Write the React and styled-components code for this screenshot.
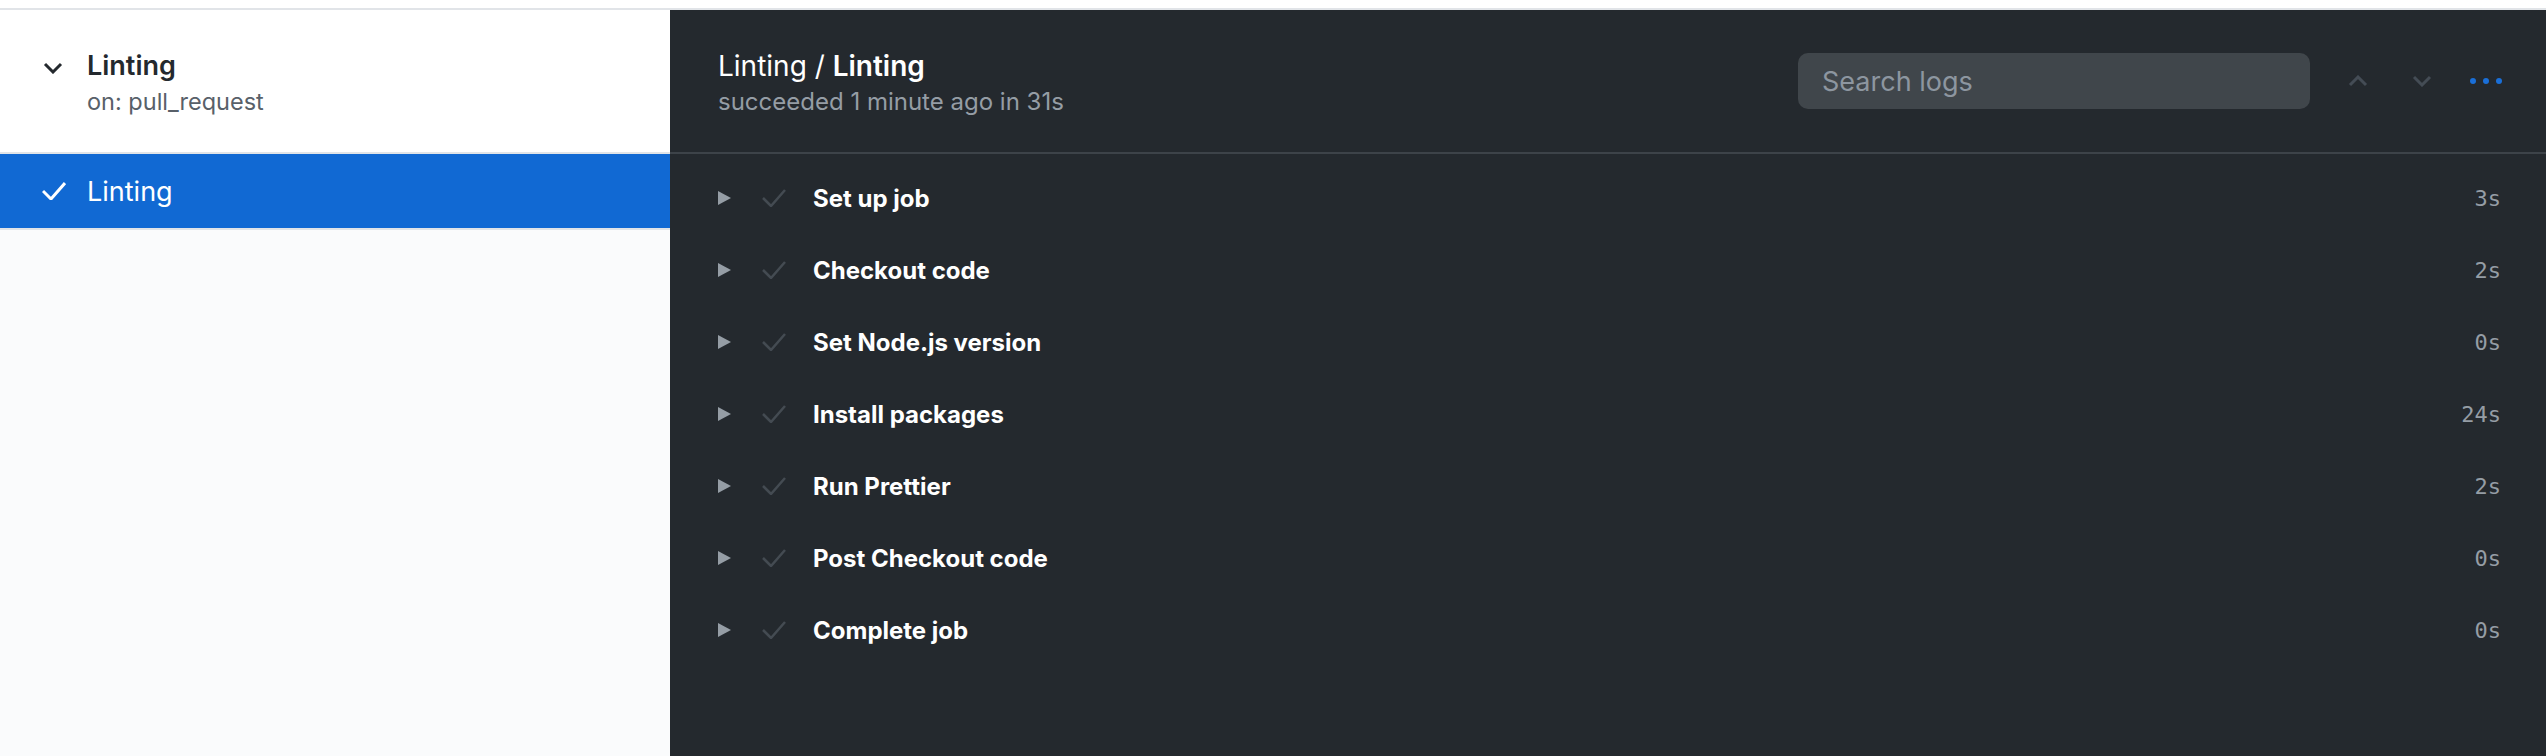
import React from 'react';
import styled, { createGlobalStyle } from 'styled-components';

const GlobalStyle = createGlobalStyle`
  html, body {
    margin: 0;
    padding: 0;
    background: #ffffff;
  }
  body {
    font-family: Inter, "Liberation Sans", sans-serif;
    -webkit-font-smoothing: antialiased;
  }
`;

const Page = styled.div`
  padding-top: 8px;
  background: #ffffff;
`;

const Main = styled.div`
  display: flex;
  height: 746px;
  border-top: 2px solid #e1e4e8;
`;

const Sidebar = styled.aside`
  width: 670px;
  flex-shrink: 0;
  background: #fafbfc;
`;

const SideHeader = styled.div`
  height: 144px;
  display: flex;
  align-items: center;
  padding: 6px 0 0 43px;
  background: #ffffff;
  border-bottom: 2px solid #e1e4e8;
  box-sizing: border-box;
`;

const SideHeaderInner = styled.div`
  display: flex;
  align-items: flex-start;
  gap: 24px;
`;

const IconSlot = styled.span`
  display: flex;
  width: 20px;
  margin-top: 14px;
`;

const TitleBlock = styled.div`
  display: flex;
  flex-direction: column;
`;

const WorkflowName = styled.div`
  font-size: 27px;
  line-height: 36px;
  font-weight: 600;
  color: #24292e;
`;

const Trigger = styled.div`
  font-size: 23.5px;
  line-height: 36px;
  color: #586069;
`;

const JobItem = styled.div`
  height: 76px;
  box-sizing: border-box;
  display: flex;
  align-items: center;
  gap: 21px;
  padding-left: 42px;
  background: ${(p) => (p.$active ? '#1169d3' : 'transparent')};
  color: ${(p) => (p.$active ? '#ffffff' : '#24292e')};
  border-bottom: 2px solid #e1e4e8;
  font-size: 27px;
`;

const Content = styled.section`
  flex: 1;
  background: #24292e;
  display: flex;
  flex-direction: column;
`;

const ContentHeader = styled.header`
  height: 144px;
  box-sizing: border-box;
  display: flex;
  align-items: center;
  padding: 0 44px 0 48px;
  border-bottom: 2px solid #3d4349;
`;

const JobTitle = styled.div`
  flex: 1;
  display: flex;
  flex-direction: column;
  padding-top: 6px;
`;

const JobName = styled.div`
  font-size: 28px;
  line-height: 36px;
  color: #ffffff;

  strong {
    font-weight: 600;
  }
`;

const JobStatus = styled.div`
  font-size: 24px;
  line-height: 36px;
  color: #959da5;
`;

const SearchBox = styled.input`
  width: 512px;
  height: 56px;
  box-sizing: border-box;
  padding: 0 24px;
  border: none;
  border-radius: 10px;
  background: #40464b;
  color: #e1e4e8;
  font-family: Inter, "Liberation Sans", sans-serif;
  font-size: 27px;
  outline: none;

  &::placeholder {
    color: #8d96a0;
  }
`;

const NavButtons = styled.div`
  display: flex;
  align-items: center;
  margin-left: 38px;
  gap: 44px;
`;

const Dots = styled.div`
  display: flex;
  gap: 7px;
  margin-left: 38px;

  span {
    width: 6px;
    height: 6px;
    border-radius: 50%;
    background: #1a6fd8;
  }
`;

const StepList = styled.div`
  padding-top: 8px;
`;

const StepRow = styled.div`
  height: 72px;
  display: flex;
  align-items: center;
  padding: 0 45px 0 48px;
`;

const Caret = styled.span`
  display: flex;
  width: 14px;
  margin-right: 30px;
`;

const StepCheck = styled.span`
  display: flex;
  width: 24px;
  margin-right: 27px;
`;

const StepName = styled.span`
  flex: 1;
  font-size: 24px;
  font-weight: 700;
  color: #ffffff;
`;

const Duration = styled.span`
  font-family: "DejaVu Sans Mono", "Liberation Mono", monospace;
  font-size: 22px;
  color: #959da5;
`;

const Chevron = ({ dir = 'down', color, size = 20 }) => (
  <svg width={size} height={size / 2 + 2} viewBox="0 0 20 12" fill="none">
    <path
      d={dir === 'down' ? 'M2 2 L10 10 L18 2' : 'M2 10 L10 2 L18 10'}
      stroke={color}
      strokeWidth="3"
    />
  </svg>
);

const Check = ({ color, width = 24, stroke = 3 }) => (
  <svg width={width} height="18" viewBox="0 0 24 18" fill="none">
    <path d="M1 9 L9 17 L23 1" stroke={color} strokeWidth={stroke} />
  </svg>
);

const steps = [
  { name: 'Set up job', time: '3s' },
  { name: 'Checkout code', time: '2s' },
  { name: 'Set Node.js version', time: '0s' },
  { name: 'Install packages', time: '24s' },
  { name: 'Run Prettier', time: '2s' },
  { name: 'Post Checkout code', time: '0s' },
  { name: 'Complete job', time: '0s' },
];

export default function App() {
  return (
    <Page>
      <GlobalStyle />
      <Main>
        <Sidebar>
          <SideHeader>
            <SideHeaderInner>
              <IconSlot>
                <Chevron dir="down" color="#24292e" />
              </IconSlot>
              <TitleBlock>
                <WorkflowName>Linting</WorkflowName>
                <Trigger>on: pull_request</Trigger>
              </TitleBlock>
            </SideHeaderInner>
          </SideHeader>
          <JobItem $active>
            <Check color="#ffffff" />
            <span>Linting</span>
          </JobItem>
        </Sidebar>

        <Content>
          <ContentHeader>
            <JobTitle>
              <JobName>
                Linting / <strong>Linting</strong>
              </JobName>
              <JobStatus>succeeded 1 minute ago in 31s</JobStatus>
            </JobTitle>
            <SearchBox placeholder="Search logs" />
            <NavButtons>
              <Chevron dir="up" color="#444c55" />
              <Chevron dir="down" color="#444c55" />
            </NavButtons>
            <Dots>
              <span />
              <span />
              <span />
            </Dots>
          </ContentHeader>

          <StepList>
            {steps.map((s) => (
              <StepRow key={s.name}>
                <Caret>
                  <svg width="13" height="14" viewBox="0 0 13 14">
                    <polygon points="0,0 13,7 0,14" fill="#959da5" />
                  </svg>
                </Caret>
                <StepCheck>
                  <Check color="#444b52" stroke={2.5} />
                </StepCheck>
                <StepName>{s.name}</StepName>
                <Duration>{s.time}</Duration>
              </StepRow>
            ))}
          </StepList>
        </Content>
      </Main>
    </Page>
  );
}
